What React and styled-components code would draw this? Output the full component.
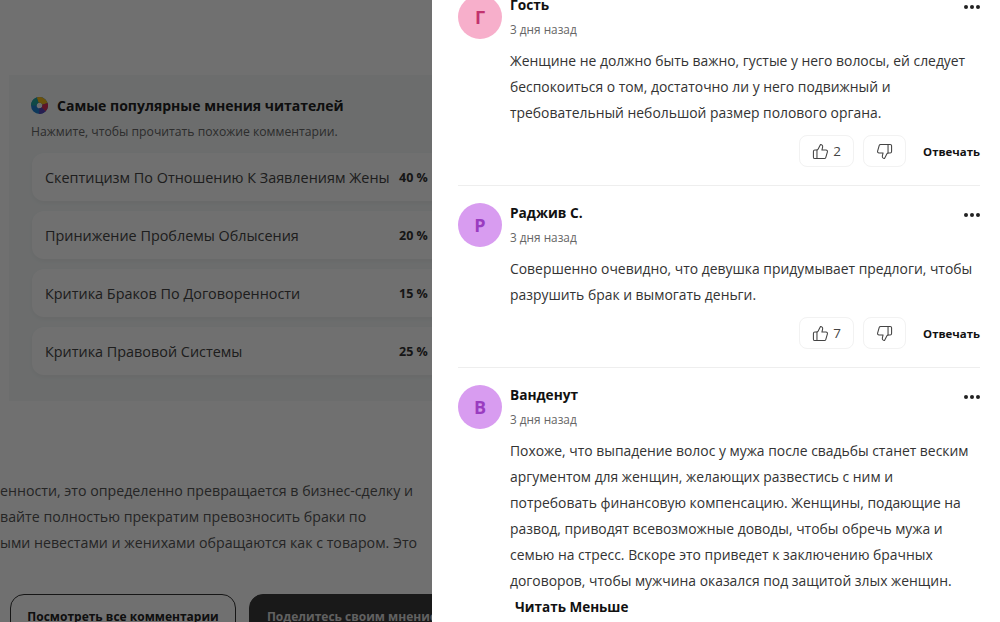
import React from 'react'
import styled, { createGlobalStyle } from 'styled-components'
import { ThumbsUp, ThumbsDown } from 'lucide-react'

const Global = createGlobalStyle`
  html, body { margin: 0; padding: 0; background: #fff; }
  * { box-sizing: border-box; }
`

const Screen = styled.div`
  width: 1000px;
  height: 622px;
  overflow: hidden;
  display: flex;
  font-family: "Open Sans", "Noto Sans", sans-serif;
`

const Page = styled.div`
  position: relative;
  width: 432px;
  height: 622px;
  flex: none;
  overflow: hidden;
  padding-top: 75px;
  background: #fff;
`

const Dim = styled.div`
  position: absolute;
  inset: 0;
  background: rgba(0, 0, 0, 0.56);
`

const Opinions = styled.section`
  width: 470px;
  height: 326px;
  margin-left: 9px;
  padding: 18px 0 0 22px;
  background: #f6f9f9;
`

const OpinionsHead = styled.div`
  display: flex;
  align-items: center;
  gap: 9px;
  height: 24px;
`

const OpinionsTitle = styled.h3`
  margin: 0;
  font-size: 14px;
  font-weight: 700;
  color: #222;
`

const OpinionsHint = styled.p`
  margin: 5px 0 11px;
  font-size: 12.2px;
  line-height: 20px;
  color: #666;
`

const Pills = styled.div`
  display: flex;
  flex-direction: column;
  gap: 10px;
`

const Pill = styled.div`
  width: 430px;
  height: 48px;
  margin-left: 1px;
  padding: 0 13px;
  display: flex;
  align-items: center;
  border-radius: 12px;
  background: #fff;
  box-shadow: 0 2px 6px rgba(0, 0, 0, 0.05);
`

const PillLabel = styled.span`
  width: 354px;
  font-size: 14.4px;
  white-space: nowrap;
  color: #444;
`

const PillValue = styled.span`
  font-size: 12.5px;
  font-weight: 700;
  color: #333;
`

const Article = styled.div`
  margin-top: 77px;
  font-size: 14.2px;
  line-height: 26px;
  color: #555;
  white-space: nowrap;
`

const ArticleLine = styled.div``

const PageActions = styled.div`
  display: flex;
  gap: 13px;
  margin: 38px 0 0 10px;
`

const PageButton = styled.div`
  flex: none;
  width: ${p => (p.$dark ? '216px' : '226px')};
  height: 50px;
  padding-top: 13px;
  text-align: center;
  border-radius: 14px;
  font-size: 12px;
  font-weight: 700;
  white-space: nowrap;
  color: ${p => (p.$dark ? '#ddd' : '#222')};
  background: ${p => (p.$dark ? '#3a3a3a' : 'transparent')};
  border: 1px solid ${p => (p.$dark ? '#3a3a3a' : '#333')};
`

const Drawer = styled.aside`
  flex: 1;
  height: 622px;
  overflow: hidden;
  padding: 0 20px 0 26px;
  background: #fff;
`

const List = styled.div`
  margin-top: -5px;
`

const Comment = styled.article`
  display: flex;
  gap: 8px;
  padding-bottom: 18px;
  margin-bottom: 17px;
  border-bottom: ${p => (p.$last ? 'none' : '1px solid #eee')};
`

const Avatar = styled.div`
  flex: none;
  width: 44px;
  height: 44px;
  border-radius: 50%;
  display: flex;
  align-items: center;
  justify-content: center;
  font-size: 18px;
  font-weight: 700;
  background: ${p => p.$bg};
  color: ${p => p.$fg};
`

const Body = styled.div`
  flex: 1;
  min-width: 0;
`

const NameRow = styled.div`
  display: flex;
  align-items: flex-start;
  justify-content: space-between;
  height: 22px;
`

const Name = styled.span`
  font-size: 13.7px;
  line-height: 20px;
  font-weight: 700;
  color: #111;
`

const Dots = styled.svg`
  width: 16px;
  height: 4px;
  margin-top: 10px;
  fill: #222;
`

const When = styled.div`
  margin-top: 2px;
  font-size: 11.8px;
  line-height: 20px;
  color: #666;
`

const Text = styled.div`
  margin-top: 9px;
  font-size: 13.9px;
  line-height: 26px;
  color: #333;
`

const More = styled.div`
  padding-left: 5px;
  font-size: 13.5px;
  font-weight: 700;
  color: #111;
`

const Actions = styled.div`
  display: flex;
  justify-content: flex-end;
  align-items: center;
  gap: 9px;
  margin-top: 9px;
`

const Vote = styled.div`
  display: flex;
  align-items: center;
  justify-content: center;
  gap: 4px;
  width: ${p => (p.$wide ? '55px' : '43px')};
  height: 32px;
  border: 1px solid #f2f2f2;
  border-radius: 8px;
  font-size: 13.5px;
  color: #444;
`

const Reply = styled.span`
  margin-left: 8px;
  font-size: 11.4px;
  font-weight: 700;
  color: #111;
`

const comments = [
  {
    letter: 'Г', name: 'Гость', bg: '#f7afcb', fg: '#c2336e', likes: 2,
    text: 'Женщине не должно быть важно, густые у него волосы, ей следует беспокоиться о том, достаточно ли у него подвижный и требовательный небольшой размер полового органа.',
  },
  {
    letter: 'Р', name: 'Раджив С.', bg: '#d89cf0', fg: '#9a3cc0', likes: 7,
    text: 'Совершенно очевидно, что девушка придумывает предлоги, чтобы разрушить брак и вымогать деньги.',
  },
  {
    letter: 'В', name: 'Ванденут', bg: '#d89cf0', fg: '#9a3cc0',
    text: 'Похоже, что выпадение волос у мужа после свадьбы станет веским аргументом для женщин, желающих развестись с ним и потребовать финансовую компенсацию. Женщины, подающие на развод, приводят всевозможные доводы, чтобы обречь мужа и семью на стресс. Вскоре это приведет к заключению брачных договоров, чтобы мужчина оказался под защитой злых женщин.',
    more: true,
  },
]

const opinions = [
  ['Скептицизм По Отношению К Заявлениям Жены', '40 %'],
  ['Принижение Проблемы Облысения', '20 %'],
  ['Критика Браков По Договоренности', '15 %'],
  ['Критика Правовой Системы', '25 %'],
]

// donut: blue left, yellow top, red right, purple bottom
function PieLogo() {
  return (
    <svg width="17" height="17" viewBox="0 0 36 36" fill="none" strokeWidth="12">
      <circle cx="18" cy="18" r="12" stroke="#1f7fd0" />
      <path d="M14 6.7a12 12 0 0 1 15.5 7.8" stroke="#f2bb1d" />
      <path d="M29.5 14.5a12 12 0 0 1 -3 12" stroke="#d8305a" />
      <path d="M26.5 26.5a12 12 0 0 1 -9 3.5" stroke="#5a44b8" />
      <path d="M6 18a12 12 0 0 1 8 -11.3" stroke="#22a6a0" />
    </svg>
  )
}

export default function App() {
  return (
    <Screen>
      <Global />
      <Page>
        <Opinions>
          <OpinionsHead>
            <PieLogo />
            <OpinionsTitle>Самые популярные мнения читателей</OpinionsTitle>
          </OpinionsHead>
          <OpinionsHint>Нажмите, чтобы прочитать похожие комментарии.</OpinionsHint>
          <Pills>
            {opinions.map(([label, value]) => (
              <Pill key={label}>
                <PillLabel>{label}</PillLabel>
                <PillValue>{value}</PillValue>
              </Pill>
            ))}
          </Pills>
        </Opinions>
        <Article>
          <ArticleLine>енности, это определенно превращается в бизнес-сделку и</ArticleLine>
          <ArticleLine>вайте полностью прекратим превозносить браки по</ArticleLine>
          <ArticleLine>ыми невестами и женихами обращаются как с товаром. Это</ArticleLine>
        </Article>
        <PageActions>
          <PageButton>Посмотреть все комментарии</PageButton>
          <PageButton $dark>Поделитесь своим мнением</PageButton>
        </PageActions>
        <Dim />
      </Page>
      <Drawer>
        <List>
          {comments.map((c, i) => (
            <Comment key={c.name} $last={i === comments.length - 1}>
              <Avatar $bg={c.bg} $fg={c.fg}>{c.letter}</Avatar>
              <Body>
                <NameRow>
                  <Name>{c.name}</Name>
                  <Dots viewBox="0 0 16 4">
                    <circle cx="2" cy="2" r="2" />
                    <circle cx="8" cy="2" r="2" />
                    <circle cx="14" cy="2" r="2" />
                  </Dots>
                </NameRow>
                <When>3 дня назад</When>
                <Text>
                  {c.text}
                  {c.more && <More>Читать Меньше</More>}
                </Text>
                {c.likes && (
                  <Actions>
                    <Vote $wide>
                      <ThumbsUp size={17} strokeWidth={1.5} />
                      {c.likes}
                    </Vote>
                    <Vote>
                      <ThumbsDown size={17} strokeWidth={1.5} />
                    </Vote>
                    <Reply>Отвечать</Reply>
                  </Actions>
                )}
              </Body>
            </Comment>
          ))}
        </List>
      </Drawer>
    </Screen>
  )
}
